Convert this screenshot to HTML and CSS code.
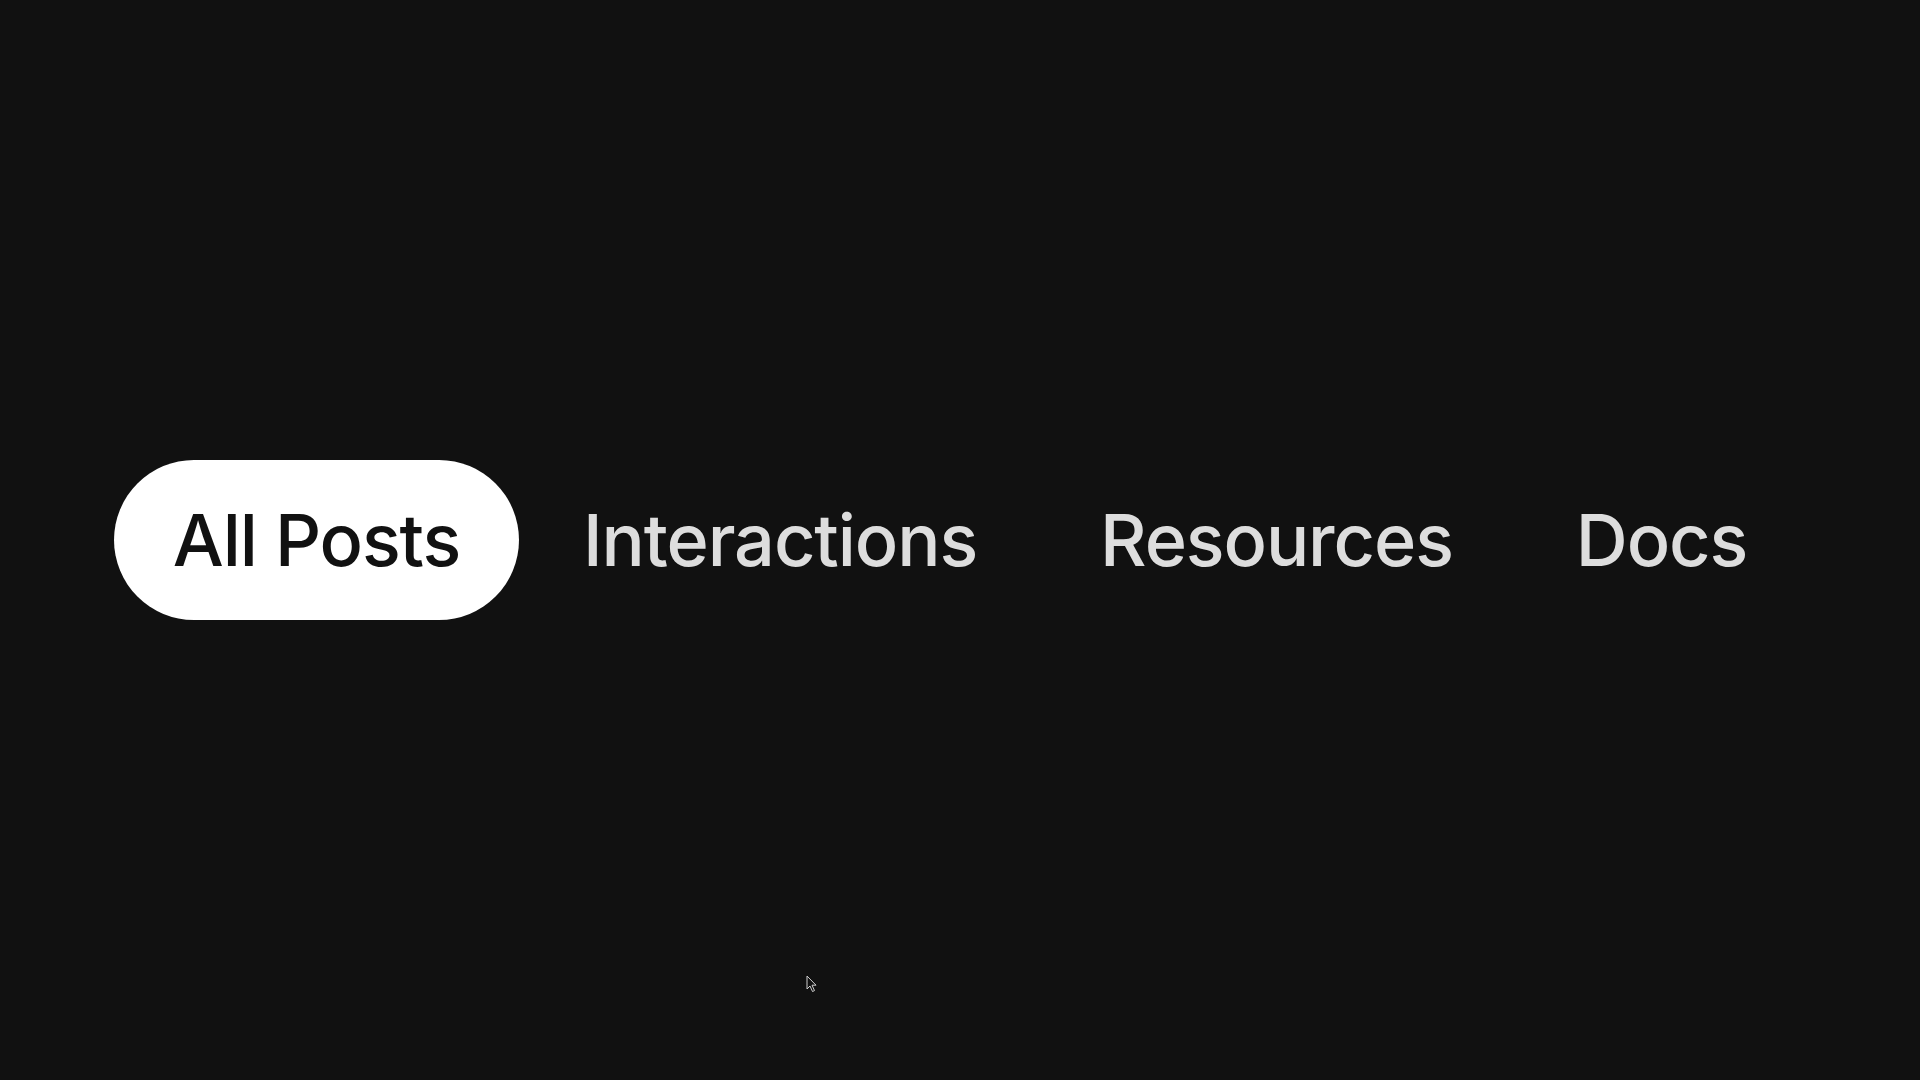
FILE: index.html
```html
<!DOCTYPE html>
<html lang="en">
<head>
<meta charset="utf-8">
<title>Tabs</title>
<link rel="stylesheet" href="styles.css">
</head>
<body>
<main class="stage">
  <nav class="tabs">
    <a class="tab active" href="#">All Posts</a>
    <a class="tab" href="#">Interactions</a>
    <a class="tab" href="#">Resources</a>
    <a class="tab" href="#">Docs</a>
  </nav>
  <svg class="cursor" width="12" height="18" viewBox="0 0 12 18"><path d="M1 1 L1 14 L4 11 L6.5 16.5 L8.5 15.6 L6 10.2 L10 10.2 Z" fill="#111" stroke="#cfcfcf" stroke-width="1"/></svg>
</main>
</body>
</html>
```
FILE: styles.css
```css
html, body {
  margin: 0;
  padding: 0;
  height: 100%;
  background: #111111;
}
.stage {
  position: relative;
  height: 100vh;
  display: flex;
  align-items: center;
  justify-content: center;
  font-family: Inter, "Noto Sans", sans-serif;
}
.tabs {
  display: flex;
  align-items: center;
  gap: 5px;
}
.tab {
  display: block;
  padding: 36px 59px;
  font-size: 72px;
  line-height: 88px;
  font-weight: 500;
  color: #dddddd;
  text-decoration: none;
  border-radius: 999px;
  letter-spacing: -1.1px;
}
.tab.active {
  background: #ffffff;
  color: #111111;
}
.cursor {
  position: absolute;
  left: 806px;
  top: 975px;
}
```
